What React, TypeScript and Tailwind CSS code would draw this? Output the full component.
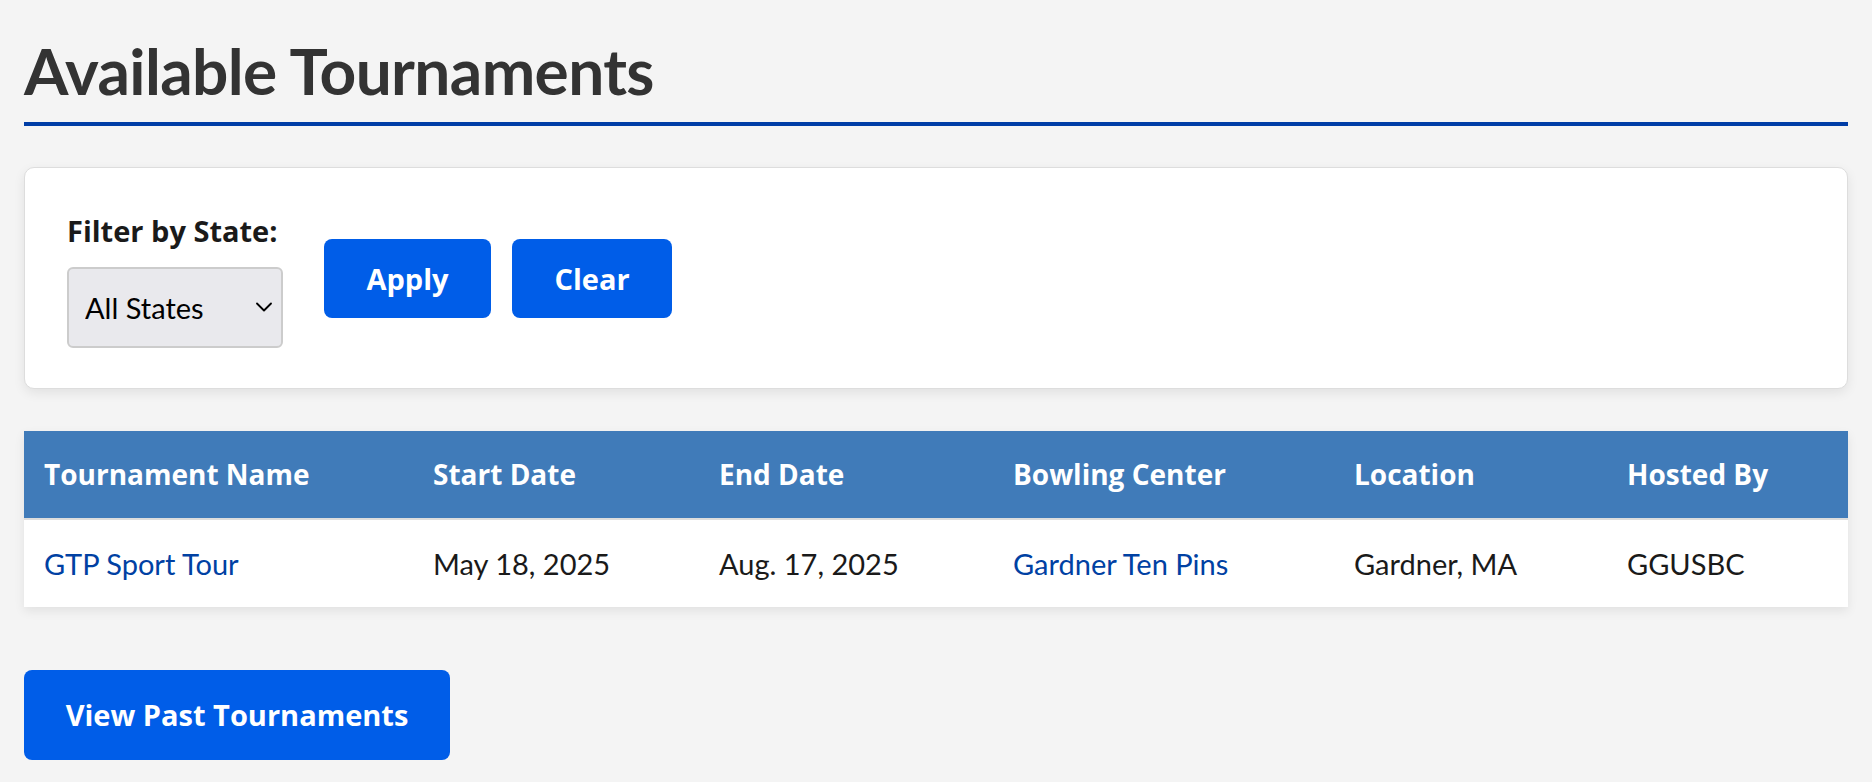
import { ChevronDown } from 'lucide-react'

type Tournament = {
  name: string
  start: string
  end: string
  center: string
  location: string
  host: string
}

const columns = [
  { label: 'Tournament Name', width: 'w-[389px]' },
  { label: 'Start Date', width: 'w-[286px]' },
  { label: 'End Date', width: 'w-[294px]' },
  { label: 'Bowling Center', width: 'w-[341px]' },
  { label: 'Location', width: 'w-[273px]' },
  { label: 'Hosted By', width: 'w-auto' },
]

const tournaments: Tournament[] = [
  {
    name: 'GTP Sport Tour',
    start: 'May 18, 2025',
    end: 'Aug. 17, 2025',
    center: 'Gardner Ten Pins',
    location: 'Gardner, MA',
    host: 'GGUSBC',
  },
]

// heavier labels use Open Sans, which runs a little wider than Lato's bold
const heavy = "font-['Open_Sans',sans-serif] font-bold"

export default function App() {
  return (
    <div className="min-h-screen bg-[#f4f4f4] px-6 pt-[33px] pb-5 font-['Lato',sans-serif]">
      <h1 className="border-b-4 border-[#003da6] pb-3 text-[64px] font-bold leading-[1.2] tracking-[-0.01em] text-[#333333]">
        Available Tournaments
      </h1>

      <div className="mt-[41px] flex items-start rounded-[10px] border border-[#dddddd] bg-white px-[42px] pt-[45px] pb-[40px] shadow-[0_4px_12px_rgba(0,0,0,0.08)]">
        <div className="flex flex-col">
          <label className={`${heavy} text-[29px] leading-[36px] text-[#1a1a1a]`}>Filter by State:</label>
          <div className="relative mt-[18px] w-[216px]">
            <select className="h-[81px] w-full appearance-none rounded-[6px] border-2 border-[#cccccc] bg-[#e9e9ed] pl-4 text-[29px] text-black outline-none">
              <option>All States</option>
            </select>
            <ChevronDown className="pointer-events-none absolute right-[5px] top-1/2 h-[28px] w-[28px] -translate-y-1/2 text-black" strokeWidth={1.6} />
          </div>
        </div>

        <div className="ml-[41px] mt-[26px] flex gap-[21px]">
          <button className={`${heavy} h-[79px] w-[167px] rounded-[8px] bg-[#005de8] text-[29px] text-white`}>Apply</button>
          <button className={`${heavy} h-[79px] w-[160px] rounded-[8px] bg-[#005de8] text-[29px] text-white`}>Clear</button>
        </div>
      </div>

      <div className="mt-[42px] shadow-[0_4px_10px_rgba(0,0,0,0.08)]">
        <table className="w-full table-fixed border-collapse bg-white text-left">
          <thead>
            <tr className="h-[88px] border-b-2 border-[#dddddd] bg-[#407bb9]">
              {columns.map((col) => (
                <th key={col.label} className={`${col.width} ${heavy} px-5 text-[28px] text-white`}>
                  {col.label}
                </th>
              ))}
            </tr>
          </thead>
          <tbody>
            {tournaments.map((t) => (
              <tr key={t.name} className="h-[88px] text-[29px] text-[#1a1a1a]">
                <td className="px-5">
                  <a href="#" className="text-[#0041a3]">{t.name}</a>
                </td>
                <td className="px-5">{t.start}</td>
                <td className="px-5">{t.end}</td>
                <td className="px-5">
                  <a href="#" className="text-[#0041a3]">{t.center}</a>
                </td>
                <td className="px-5">{t.location}</td>
                <td className="px-5">{t.host}</td>
              </tr>
            ))}
          </tbody>
        </table>
      </div>

      <button className={`${heavy} mt-[63px] h-[90px] w-[426px] rounded-[8px] bg-[#005de8] text-[29px] text-white`}>
        View Past Tournaments
      </button>
    </div>
  )
}
